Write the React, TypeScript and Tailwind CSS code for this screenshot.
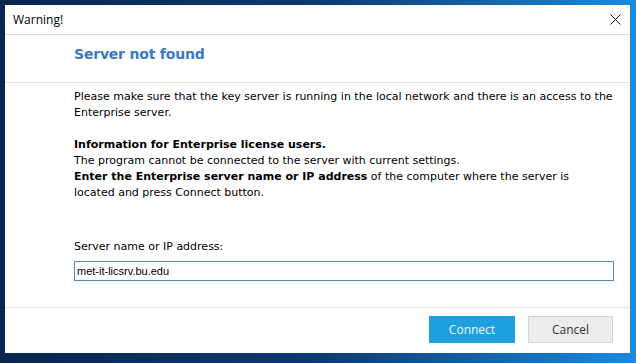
export default function App() {
  return (
    <div className="w-[636px] h-[363px] overflow-hidden bg-gradient-to-r from-[#0a2550] via-[#0c3a72] to-[#1a8be0] pt-[5px] pl-[5px]">
      <div className="w-[625px] h-[348px] bg-white flex flex-col">
        {/* Title bar */}
        <div className="h-[30px] border-b border-[#dadada] flex items-center justify-between pl-[8px] pr-[9px]">
          <span className="font-['Open_Sans',sans-serif] text-[12px] text-black">Warning!</span>
          <svg width="11" height="11" viewBox="0 0 11 11">
            <path d="M0.5 0.5 L10.5 10.5 M10.5 0.5 L0.5 10.5" stroke="#111" strokeWidth="1" fill="none" />
          </svg>
        </div>

        {/* Header */}
        <div className="h-[48px] border-b border-[#e3e3e3] pl-[69px] pt-[9px]">
          <h1 className="font-['DejaVu_Sans',sans-serif] font-bold text-[14px] tracking-[-0.2px] leading-[20px] text-[#3b78c9]">
            Server not found
          </h1>
        </div>

        {/* Body */}
        <div className="flex-1 pl-[69px] pr-[12px] pt-[6px] font-['DejaVu_Sans',sans-serif] text-[11px] leading-[16px] text-black">
          <p>
            Please make sure that the key server is running in the local network and there is an access to the
            Enterprise server.
          </p>
          <p className="mt-[16px] font-bold">Information for Enterprise license users.</p>
          <p>The program cannot be connected to the server with current settings.</p>
          <p className="w-[500px]">
            <span className="font-bold">Enter the Enterprise server name or IP address</span> of the computer where the
            server is located and press Connect button.
          </p>
          <p className="mt-[38px]">Server name or IP address:</p>
          <div className="mt-[6px] w-[540px] h-[20px] border border-[#5b88b5] flex items-center pl-[2px] font-['Liberation_Sans',sans-serif] text-[11px]">
            met-it-licsrv.bu.edu
          </div>
        </div>

        {/* Footer */}
        <div className="h-[46px] border-t border-[#e3e3e3] flex justify-end items-start gap-[13px] pt-[8px] pr-[17px] font-['Open_Sans',sans-serif] text-[12px]">
          <button className="w-[86px] h-[27px] bg-[#1e9fe0] text-[#eef7fd]">Connect</button>
          <button className="w-[85px] h-[27px] bg-[#ececec] border border-[#d3d3d3] text-[#333]">Cancel</button>
        </div>
      </div>
    </div>
  );
}
